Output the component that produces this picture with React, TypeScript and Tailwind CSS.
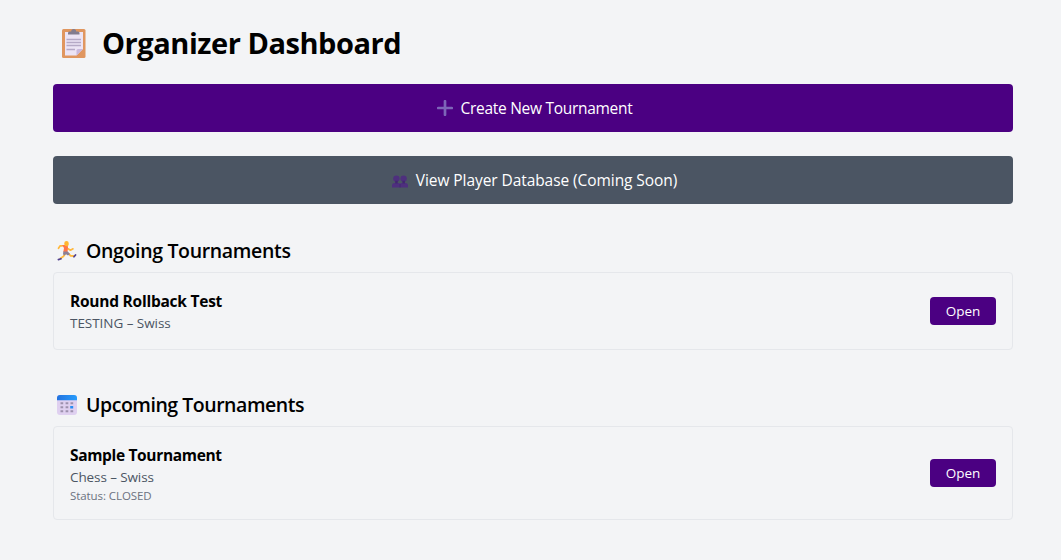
type Tournament = {
  name: string;
  nameClass: string;
  detail: string;
  detailClass: string;
  status?: string;
};

function ClipboardIcon() {
  return (
    <svg className="h-[32px] w-[26px] shrink-0" viewBox="0 0 26 32">
      <rect x="1" y="2" width="23.500" height="29" rx="1.500" fill="#e0965f" />
      <path d="M4 5h18v17l-6.500 6.500H4z" fill="#ece4f5" />
      <path d="M15.500 28.500v-5q0-1.500 1.500-1.500h5z" fill="#c9b8dc" />
      <path d="M7 7.500V6q0-1.500 1.500-1.500h1.700a2.500 2.500 0 0 1 5 0h1.800q1.500 0 1.500 1.500v1.500z" fill="#827c8f" />
      <path d="M5.500 12.500h14.500M5.500 15.500h14.500M5.500 18.500h14.500M5.500 22.500h8.500" stroke="#b5a9c6" strokeWidth="1.300" />
    </svg>
  );
}

function PlusIcon() {
  return (
    <svg className="h-4 w-4 shrink-0" viewBox="0 0 16 16">
      <path d="M8 1.200v13.600M1.200 8h13.600" stroke="#7d65b8" strokeWidth="2.700" strokeLinecap="round" />
    </svg>
  );
}

function PeopleIcon() {
  return (
    <svg className="mt-[3px] h-[13px] w-4 shrink-0" viewBox="0 0 16 13">
      <g fill="#4e2f7e">
        <circle cx="4.400" cy="3.600" r="3.200" />
        <circle cx="11.600" cy="3.600" r="3.200" />
        <path d="M0 12.500v-2Q0 8 2.500 8h3.800Q8 8 8 9.200 8 8 9.700 8h3.800Q16 8 16 10.500v2z" />
      </g>
      <path d="M3.200 5.800h2.500v2.600H3.200zM10.400 5.800h2.500v2.600h-2.500z" fill="#412670" />
      <path d="M7.700 9h.7v3.500h-.7z" fill="#3f246b" />
    </svg>
  );
}

function RunnerIcon() {
  return (
    <svg className="h-5 w-5 shrink-0" viewBox="0 0 20 20">
      <path d="M5.200 4.800H3.200L1.500 7.300M11 7.800l2.500 1.400 2.500-1.400" fill="none" stroke="#ffb83d" strokeWidth="1.700" strokeLinecap="round" strokeLinejoin="round" />
      <path d="M8 13.200 6.300 15.500 3.600 17.200M12 13l1.600 1.800 2.800.2" fill="none" stroke="#ffb83d" strokeWidth="1.800" strokeLinecap="round" strokeLinejoin="round" />
      <path d="M5 4h4.500q1.800.5 1.500 2.500l-.5 4.500H6.300L7 7z" fill="#ff7548" />
      <path d="M6.300 10.500h4.500l2.200 2.500-2 1.600-2-1.400-2 1.300-1-1.500z" fill="#8d8096" />
      <path d="M7.300 2q0-2 2.200-2t2.200 2v1.800q-.4 1.500-2 1.500-2.400 0-2.400-2z" fill="#ffb52e" />
      <path d="m1.400 18.600 2.600-.8M17 15.800l1.500-1.800" stroke="#51418f" strokeWidth="1.700" strokeLinecap="round" />
    </svg>
  );
}

function CalendarIcon() {
  return (
    <svg className="h-5 w-5 shrink-0" viewBox="0 0 20 20">
      <defs>
        <linearGradient id="calendar-header" x1="0" y1="0" x2="1" y2="0">
          <stop stopColor="#2372df" />
          <stop offset="1" stopColor="#269cfc" />
        </linearGradient>
      </defs>
      <rect width="20" height="20" rx="3" fill="#dfd0f0" />
      <path d="M0 5.300V3q0-3 3-3h14q3 0 3 3v2.300z" fill="url(#calendar-header)" />
      <path d="M3.500 7.200h2.700v2H3.500zM8.600 7.200h2.700v2H8.600zM13.500 7.200h2.700v2h-2.700zM3.500 11.200h2.700v2H3.500zM8.600 11.200h2.700v2H8.600zM3.500 15.200h2.700v2H3.500zM8.600 15.200h2.700v2H8.600zM13.500 15.200h2.700v2h-2.700z" fill="#9d91ad" />
      <path d="M13.200 11h3v2.500h-3z" fill="#268cf4" />
    </svg>
  );
}

function Card({ name, nameClass, detail, detailClass, status }: Tournament) {
  return (
    <div className="flex items-center justify-between rounded border border-gray-200 p-4">
      <div>
        <h3 className={`text-[15.500px] leading-6 font-bold ${nameClass}`}>{name}</h3>
        <p className={`text-[13.500px] leading-5 text-[#4b5563] ${detailClass}`}>{detail}</p>
        {status && (
          <p className="h-4 pt-px text-[11.500px] leading-4 tracking-[-0.08px] text-[#6b7280]">{status}</p>
        )}
      </div>
      <button className="h-7 w-[66px] rounded bg-[#4b0082] text-[13.500px] leading-5 text-white">Open</button>
    </div>
  );
}

export default function App() {
  return (
    <div className="min-h-[560px] bg-[#f3f4f6] font-['Open_Sans',sans-serif] text-black">
      <main className="ml-[53px] w-[960px] pt-6">
        <h1 className="mb-6 flex h-9 items-center gap-[15px] pt-0.5 pl-2 text-[29px] font-bold tracking-[-0.46px]">
          <ClipboardIcon />
          Organizer Dashboard
        </h1>
        <button className="mb-6 flex h-12 w-full items-center justify-center gap-2 rounded bg-[#4b0082] pl-[3px] text-[15.500px] tracking-[-0.29px] text-white">
          <PlusIcon />
          <span className="pt-0.5">Create New Tournament</span>
        </button>
        <button className="mb-8 flex h-12 w-full items-center justify-center gap-2 rounded bg-[#4b5563] pl-[3px] text-[15.500px] tracking-[-0.07px] text-white">
          <PeopleIcon />
          <span className="pt-0.5">View Player Database (Coming Soon)</span>
        </button>
        <section className="mb-10">
          <h2 className="mb-2 flex h-7 items-center gap-[9px] pt-0.5 pl-1 text-[19.500px] font-semibold tracking-[-0.34px]">
            <RunnerIcon />
            Ongoing Tournaments
          </h2>
          <Card
            name="Round Rollback Test"
            nameClass="tracking-[-0.24px]"
            detail="TESTING – Swiss"
            detailClass="tracking-[-0.05px]"
          />
        </section>
        <section>
          <h2 className="mb-2 flex h-7 items-center gap-[9px] pt-0.5 pl-1 text-[19.500px] font-semibold tracking-[-0.47px]">
            <CalendarIcon />
            Upcoming Tournaments
          </h2>
          <Card
            name="Sample Tournament"
            nameClass="tracking-[-0.34px]"
            detail="Chess – Swiss"
            detailClass="tracking-[-0.1px]"
            status="Status: CLOSED"
          />
        </section>
      </main>
    </div>
  );
}
